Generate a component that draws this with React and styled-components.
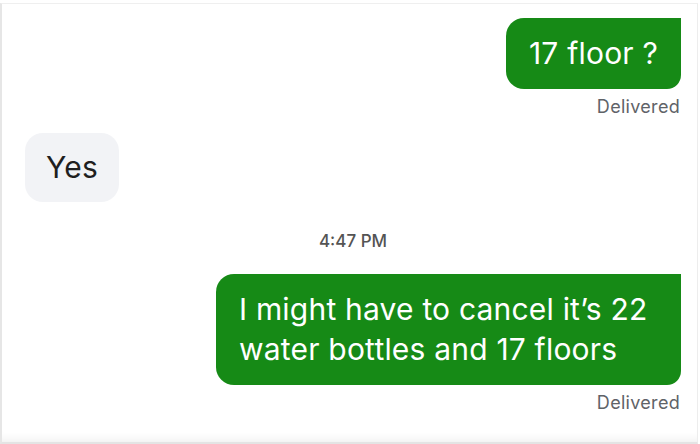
import React from "react";
import styled, { createGlobalStyle } from "styled-components";

const GlobalStyle = createGlobalStyle`
  html, body {
    margin: 0;
    padding: 0;
    background: #ffffff;
  }
  body {
    font-family: Inter, "Open Sans", "Liberation Sans", sans-serif;
  }
`;

const Frame = styled.div`
  box-sizing: border-box;
  width: 698px;
  height: 441px;
  margin-top: 3px;
  border-top: 1px solid #efefef;
  border-left: 2px solid #e6e6e6;
  border-right: 1px solid #ededed;
  border-bottom: 2px solid #e4e4e4;
  box-shadow: inset 0 -10px 10px -8px rgba(0, 0, 0, 0.07);
  padding: 14px 16px 0 23px;
  display: flex;
  flex-direction: column;
  overflow: hidden;
`;

const Row = styled.div`
  display: flex;
  justify-content: ${(p) => (p.$out ? "flex-end" : "flex-start")};
  margin-top: ${(p) => p.$gap || 0}px;
`;

const Bubble = styled.div`
  box-sizing: border-box;
  max-width: 465px;
  padding: ${(p) => (p.$out ? "15px 23px 16px 23px" : "14px 21px 15px 21px")};
  font-size: 30px;
  line-height: 40px;
  letter-spacing: 0.2px;
  color: ${(p) => (p.$out ? "#ffffff" : "#1f1f1f")};
  background: ${(p) => (p.$out ? "#168a16" : "#f2f3f6")};
  border-radius: ${(p) => (p.$out ? "18px 0 14px 18px" : "18px")};
`;

const Status = styled.div`
  align-self: flex-end;
  margin-top: 8px;
  margin-right: 1px;
  font-size: 18px;
  line-height: 20px;
  letter-spacing: 0.3px;
  color: #5f6368;
`;

const Stamp = styled.div`
  align-self: center;
  margin-top: 29px;
  font-size: 17px;
  line-height: 20px;
  font-weight: 500;
  color: #545454;
`;

export default function App() {
  return (
    <>
      <GlobalStyle />
      <Frame>
        <Row $out>
          <Bubble $out>17 floor ?</Bubble>
        </Row>
        <Status>Delivered</Status>
        <Row $gap={16}>
          <Bubble>Yes</Bubble>
        </Row>
        <Stamp>4:47 PM</Stamp>
        <Row $out $gap={23}>
          <Bubble $out>I might have to cancel it’s 22 water bottles and 17 floors</Bubble>
        </Row>
        <Status>Delivered</Status>
      </Frame>
    </>
  );
}
